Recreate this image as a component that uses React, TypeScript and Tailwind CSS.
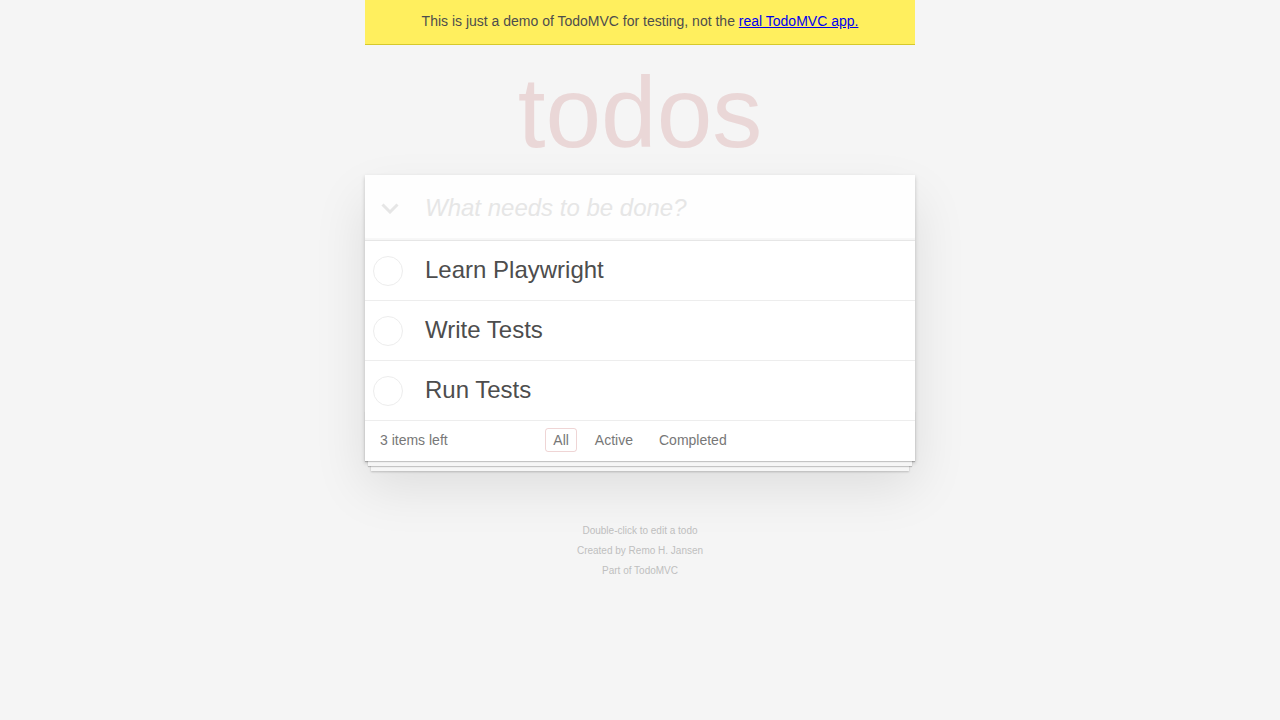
const todos = ['Learn Playwright', 'Write Tests', 'Run Tests']
const filters = ['All', 'Active', 'Completed']

function ToggleAll() {
  return (
    <svg width="18" height="11" viewBox="0 0 18 11" className="text-[#e6e6e6]">
      <polyline points="1.5,1.5 9,9 16.5,1.5" fill="none" stroke="currentColor" strokeWidth="3" />
    </svg>
  )
}

function TodoItem({ title }: { title: string }) {
  return (
    <li className="flex h-[60px] items-center border-b border-[#ededed] text-[24px]">
      <div className="w-[60px] shrink-0 pl-[8px]">
        <div className="h-[30px] w-[30px] rounded-full border border-[#ededed]" />
      </div>
      <label className="leading-[1.2] text-[#4d4d4d]">{title}</label>
    </li>
  )
}

export default function App() {
  return (
    <div className="min-h-screen bg-[#f5f5f5] font-['Liberation_Sans',Arial,sans-serif] text-[14px] leading-[1.4em] text-[#4d4d4d]">
      <div className="mx-auto w-[550px]">
        <div className="flex h-[45px] items-center justify-center border-b border-[#d6c92c] bg-[#ffef5e] pb-[1px] text-[#4d4d4d]">
          <span>
            This is just a demo of TodoMVC for testing, not the{' '}
            <a href="#" className="text-[#0000ee] underline">real TodoMVC app.</a>
          </span>
        </div>

        <h1 className="h-[130px] pt-[17px] text-center text-[100px] leading-[100px] font-extralight text-[rgba(175,47,47,0.15)]">
          todos
        </h1>

        <section className="relative bg-white shadow-[0_2px_4px_0_rgba(0,0,0,0.2),0_25px_50px_0_rgba(0,0,0,0.1)]">
          <header className="flex h-[65px] items-center bg-[rgba(0,0,0,0.003)] shadow-[inset_0_-2px_1px_rgba(0,0,0,0.03)]">
            <div className="w-[60px] shrink-0 pl-[16px] pt-[2px]">
              <ToggleAll />
            </div>
            <input
              className="w-full bg-transparent pr-4 text-[24px] text-[#4d4d4d] outline-none placeholder:italic placeholder:text-[#e6e6e6]"
              placeholder="What needs to be done?"
            />
          </header>

          <ul className="border-t border-[#e6e6e6]">
            {todos.map((t) => (
              <TodoItem key={t} title={t} />
            ))}
          </ul>

          <footer className="relative grid h-[40px] grid-cols-[1fr_auto_1fr] items-center px-[15px] text-[#777]">
            <div className="pointer-events-none absolute inset-x-0 bottom-0 h-[50px] overflow-hidden shadow-[0_1px_1px_rgba(0,0,0,0.2),0_8px_0_-3px_#f6f6f6,0_9px_1px_-3px_rgba(0,0,0,0.2),0_16px_0_-6px_#f6f6f6,0_17px_2px_-6px_rgba(0,0,0,0.2)]" />
            <span className="relative">3 items left</span>
            <ul className="relative mb-[2px] flex gap-[4px]">
              {filters.map((f, i) => (
                <li key={f}>
                  <a
                    href="#"
                    className={`m-[3px] inline-block rounded-[3px] border px-[7px] py-[3px] leading-[16px] ${
                      i === 0 ? 'border-[rgba(175,47,47,0.2)]' : 'border-transparent'
                    }`}
                  >
                    {f}
                  </a>
                </li>
              ))}
            </ul>
            <span />
          </footer>
        </section>

        <footer className="mt-[65px] flex flex-col items-center gap-[10px] text-[10px] leading-[10px] text-[#bfbfbf]">
          <p>Double-click to edit a todo</p>
          <p>Created by Remo H. Jansen</p>
          <p>Part of TodoMVC</p>
        </footer>
      </div>
    </div>
  )
}
